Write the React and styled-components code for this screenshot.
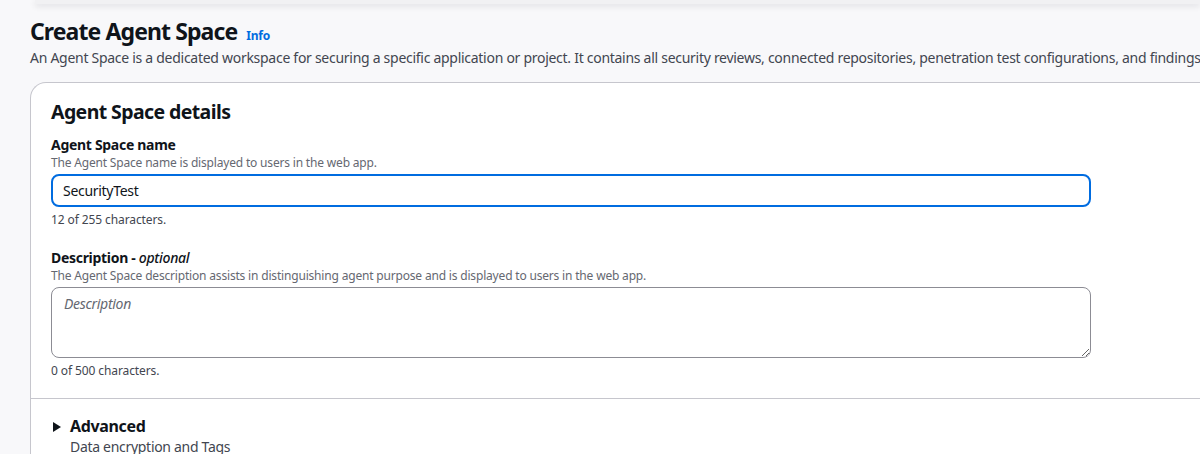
import React from "react";
import styled, { createGlobalStyle } from "styled-components";

const Global = createGlobalStyle`
  html, body { margin: 0; padding: 0; }
  body {
    background: #f8f8fa;
    font-family: "Noto Sans", "Open Sans", sans-serif;
    color: #0f141a;
    overflow: hidden;
  }
`;

const Page = styled.div`
  width: 1200px;
  height: 454px;
  overflow: hidden;
  background: #f8f8fa;
  display: flex;
  flex-direction: column;
`;

const TopStrip = styled.div`
  flex-shrink: 0;
  margin-left: 35px;
  height: 4px;
  background: #f1f1f3;
  box-shadow: 0 2px 6px rgba(0, 7, 22, 0.12);
`;

const Header = styled.header`
  flex-shrink: 0;
  padding: 12px 0 0 30px;
  display: flex;
  flex-direction: column;
  gap: 2px;
  height: 66px;
`;

const TitleRow = styled.div`
  display: flex;
  align-items: baseline;
  gap: 9px;
`;

const Title = styled.h1`
  margin: 0;
  font-size: 23px;
  line-height: 30px;
  font-weight: 700;
  letter-spacing: -0.9px;
  color: #0f141a;
`;

const InfoLink = styled.a`
  font-size: 12px;
  font-weight: 700;
  letter-spacing: -0.2px;
  color: #006ce0;
  text-decoration: none;
`;

const HeaderDesc = styled.p`
  margin: 0;
  font-size: 14px;
  line-height: 20px;
  letter-spacing: -0.28px;
  color: #424650;
  white-space: nowrap;
`;

const Card = styled.section`
  flex: 1 0 auto;
  margin-left: 30px;
  background: #ffffff;
  border: 1px solid #c6c6cd;
  border-right: none;
  border-top-left-radius: 16px;
  display: flex;
  flex-direction: column;
`;

const CardBody = styled.div`
  padding: 16px 0 0 20px;
  display: flex;
  flex-direction: column;
`;

const CardTitle = styled.h2`
  margin: 0 0 11px;
  font-size: 19.5px;
  line-height: 26px;
  font-weight: 700;
  letter-spacing: -0.6px;
  color: #0f141a;
`;

const Field = styled.div`
  display: flex;
  flex-direction: column;
  margin-bottom: ${(p) => p.$gap || 0}px;
`;

const Label = styled.label`
  font-size: 14px;
  line-height: 18px;
  font-weight: 700;
  letter-spacing: -0.3px;
  color: #0f141a;
  em {
    font-weight: 500;
    font-style: italic;
  }
`;

const Hint = styled.span`
  font-size: 12px;
  line-height: 16px;
  letter-spacing: -0.18px;
  color: #656871;
  margin-top: 1px;
`;

const Constraint = styled.span`
  font-size: 12px;
  line-height: 16px;
  letter-spacing: -0.1px;
  color: #424650;
  margin-top: 5px;
`;

const TextInput = styled.input`
  box-sizing: border-box;
  width: 1040px;
  height: 33px;
  margin-top: 3px;
  padding: 0 10px;
  border: 2px solid #006ce0;
  border-radius: 8px;
  font-family: inherit;
  font-size: 14px;
  letter-spacing: -0.3px;
  color: #0f141a;
  outline: none;
  background: #fff;
`;

const TextArea = styled.textarea`
  box-sizing: border-box;
  width: 1040px;
  height: 71px;
  margin-top: 3px;
  padding: 6px 12px;
  border: 1px solid #8c8c94;
  border-radius: 8px;
  font-family: inherit;
  font-size: 14px;
  line-height: 20px;
  letter-spacing: -0.3px;
  color: #0f141a;
  outline: none;
  resize: vertical;
  background: #fff;
  &::placeholder {
    color: #656871;
    font-style: italic;
  }
`;

const Divider = styled.hr`
  margin: 19px 0 0;
  border: none;
  border-top: 1px solid #c6c6cd;
`;

const Expander = styled.div`
  padding: 17px 0 0 22px;
  display: flex;
  gap: 9px;
  align-items: flex-start;
`;

const Caret = styled.span`
  width: 0;
  height: 0;
  margin-top: 6px;
  border-top: 5px solid transparent;
  border-bottom: 5px solid transparent;
  border-left: 8px solid #0f141a;
`;

const ExpanderText = styled.div`
  display: flex;
  flex-direction: column;
`;

const ExpanderTitle = styled.span`
  font-size: 16px;
  line-height: 21px;
  font-weight: 700;
  letter-spacing: -0.35px;
  color: #0f141a;
`;

const ExpanderDesc = styled.span`
  font-size: 14px;
  line-height: 20px;
  letter-spacing: -0.3px;
  color: #424650;
`;

export default function App() {
  return (
    <Page>
      <Global />
      <TopStrip />
      <Header>
        <TitleRow>
          <Title>Create Agent Space</Title>
          <InfoLink href="#">Info</InfoLink>
        </TitleRow>
        <HeaderDesc>
          An Agent Space is a dedicated workspace for securing a specific application or project. It contains all security reviews, connected repositories, penetration test configurations, and findings for that application.
        </HeaderDesc>
      </Header>
      <Card>
        <CardBody>
          <CardTitle>Agent Space details</CardTitle>
          <Field $gap={21}>
            <Label>Agent Space name</Label>
            <Hint>The Agent Space name is displayed to users in the web app.</Hint>
            <TextInput defaultValue="SecurityTest" />
            <Constraint>12 of 255 characters.</Constraint>
          </Field>
          <Field>
            <Label>
              Description - <em>optional</em>
            </Label>
            <Hint>The Agent Space description assists in distinguishing agent purpose and is displayed to users in the web app.</Hint>
            <TextArea placeholder="Description" />
            <Constraint>0 of 500 characters.</Constraint>
          </Field>
        </CardBody>
        <Divider />
        <Expander>
          <Caret />
          <ExpanderText>
            <ExpanderTitle>Advanced</ExpanderTitle>
            <ExpanderDesc>Data encryption and Tags</ExpanderDesc>
          </ExpanderText>
        </Expander>
      </Card>
    </Page>
  );
}
